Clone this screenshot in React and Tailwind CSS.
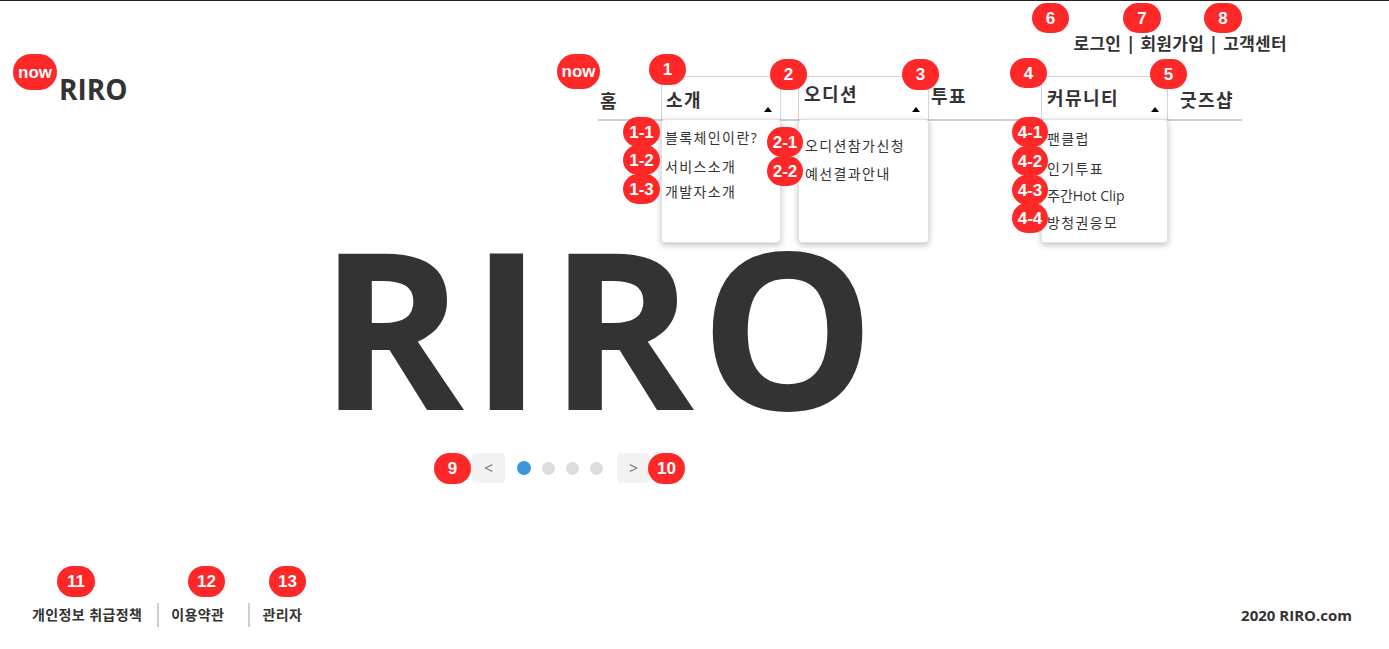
import React from 'react';

// annotation badge (red marker overlay)
const Badge = ({ className, children }) => (
  <span
    className={`absolute flex items-center justify-center rounded-full bg-[#ff2828] text-white font-bold text-[17px] leading-none tracking-normal font-['Liberation_Sans',Arial,sans-serif] ${className}`}
  >
    {children}
  </span>
);

const Caret = () => (
  <span className="absolute right-[8px] bottom-[7px] w-0 h-0 border-l-[4px] border-r-[4px] border-b-[5px] border-l-transparent border-r-transparent border-b-black" />
);

const dropdown =
  'absolute left-[-1px] top-[42px] h-[124px] bg-white border border-[#e2e2e2] rounded-[4px] shadow-[0_2px_6px_rgba(0,0,0,0.25)] text-[14px] font-normal leading-[20px] tracking-[1.4px]';

const App = () => {
  return (
    <div className="relative w-[1389px] h-[649px] overflow-hidden bg-white border-t border-[#222] text-[#333] flex flex-col font-['Open_Sans','Noto_Sans_CJK_KR',sans-serif]">
      {/* header */}
      <div className="flex items-start">
        <div className="pl-[59px] pt-[70px] text-[28px] font-bold leading-[36px]">RIRO</div>

        <div className="ml-auto mr-[102px] w-[689px] flex flex-col">
          <div className="pt-[32px] text-right text-[17px] font-bold leading-[22px] tracking-[0.3px]">
            로그인 | 회원가입 | 고객센터
          </div>

          {/* nav */}
          <div className="mt-[21px] w-[644px] h-[45px] flex border-b-2 border-[#cfcfcf] text-[18px] font-bold leading-[24px] tracking-[1.4px]">
            <div className="w-[63px] pt-[13px] pl-[2px]">홈</div>

            <div className="relative w-[120px] border border-b-0 border-[#d4d4d4] pt-[11px] pl-[4px]">
              소개
              <Caret />
              <div className={`${dropdown} w-[120px] pl-[3px] pt-[8px]`}>
                <div>블록체인이란?</div>
                <div className="mt-[9px]">서비스소개</div>
                <div className="mt-[5px]">개발자소개</div>
              </div>
            </div>

            <div className="w-[17px]" />

            <div className="relative w-[131px] border border-b-0 border-[#d4d4d4] pt-[5px] pl-[5px]">
              오디션
              <Caret />
              <div className={`${dropdown} w-[131px] pl-[6px] pt-[16px]`}>
                <div>오디션참가신청</div>
                <div className="mt-[8px]">예선결과안내</div>
              </div>
            </div>

            <div className="w-[112px] pt-[8px] pl-[2px]">투표</div>

            <div className="relative w-[127px] border border-b-0 border-[#d4d4d4] pt-[9px] pl-[5px]">
              커뮤니티
              <Caret />
              <div className={`${dropdown} w-[127px] pl-[5px] pt-[9px]`}>
                <div>팬클럽</div>
                <div className="mt-[10px]">인기투표</div>
                <div className="mt-[7px] tracking-normal">주간Hot Clip</div>
                <div className="mt-[7px]">방청권응모</div>
              </div>
            </div>

            <div className="flex-1 pt-[12px] pl-[12px]">굿즈샵</div>
          </div>
        </div>
      </div>

      {/* hero */}
      <div className="ml-[318px] mt-[94px] w-[564px] flex justify-center">
        <div className="text-[220px] font-bold leading-[220px] tracking-[6px] text-[#333]">RIRO</div>
      </div>

      {/* slider controls */}
      <div className="ml-[472px] mt-[18px] flex items-center h-[30px]">
        <button className="w-[33px] h-[30px] rounded-[4px] bg-[#f3f3f3] text-[#777] text-[16px] leading-none">&lt;</button>
        <div className="flex items-center gap-[11px] ml-[12px]">
          <span className="w-[14px] h-[14px] rounded-full bg-[#3b95dd]" />
          <span className="w-[13px] h-[13px] rounded-full bg-[#dddddd]" />
          <span className="w-[13px] h-[13px] rounded-full bg-[#dddddd]" />
          <span className="w-[13px] h-[13px] rounded-full bg-[#dddddd]" />
        </div>
        <button className="ml-[14px] w-[33px] h-[30px] rounded-[4px] bg-[#f3f3f3] text-[#777] text-[16px] leading-none">&gt;</button>
      </div>

      {/* footer */}
      <div className="mt-auto mb-[22px] flex items-center px-[32px] text-[14px] font-bold leading-[20px] tracking-[0.4px]">
        <span>개인정보 취급정책</span>
        <span className="ml-[15px] mr-[12px] w-[2px] h-[24px] bg-[#cfcfcf]" />
        <span>이용약관</span>
        <span className="ml-[24px] mr-[12px] w-[2px] h-[24px] bg-[#cfcfcf]" />
        <span>관리자</span>
        <span className="ml-auto mr-[5px] text-[15px] tracking-normal">2020 RIRO.com</span>
      </div>

      {/* annotation markers */}
      <Badge className="left-[13px] top-[53px] w-[44px] h-[36px]">now</Badge>
      <Badge className="left-[557px] top-[53px] w-[43px] h-[35px]">now</Badge>
      <Badge className="left-[649px] top-[53px] w-[37px] h-[31px]">1</Badge>
      <Badge className="left-[770px] top-[58px] w-[37px] h-[31px]">2</Badge>
      <Badge className="left-[902px] top-[58px] w-[37px] h-[31px]">3</Badge>
      <Badge className="left-[1010px] top-[57px] w-[37px] h-[30px]">4</Badge>
      <Badge className="left-[1150px] top-[58px] w-[37px] h-[30px]">5</Badge>
      <Badge className="left-[1032px] top-[2px] w-[37px] h-[30px]">6</Badge>
      <Badge className="left-[1123px] top-[2px] w-[38px] h-[30px]">7</Badge>
      <Badge className="left-[1204px] top-[2px] w-[38px] h-[30px]">8</Badge>

      <Badge className="left-[623px] top-[116px] w-[37px] h-[30px]">1-1</Badge>
      <Badge className="left-[623px] top-[144px] w-[37px] h-[30px]">1-2</Badge>
      <Badge className="left-[623px] top-[173px] w-[37px] h-[30px]">1-3</Badge>
      <Badge className="left-[767px] top-[126px] w-[36px] h-[30px]">2-1</Badge>
      <Badge className="left-[767px] top-[155px] w-[36px] h-[30px]">2-2</Badge>
      <Badge className="left-[1012px] top-[116px] w-[36px] h-[30px]">4-1</Badge>
      <Badge className="left-[1012px] top-[145px] w-[36px] h-[30px]">4-2</Badge>
      <Badge className="left-[1012px] top-[174px] w-[36px] h-[30px]">4-3</Badge>
      <Badge className="left-[1012px] top-[202px] w-[36px] h-[30px]">4-4</Badge>

      <Badge className="left-[434px] top-[452px] w-[37px] h-[31px]">9</Badge>
      <Badge className="left-[648px] top-[452px] w-[37px] h-[31px]">10</Badge>

      <Badge className="left-[57px] top-[565px] w-[38px] h-[31px]">11</Badge>
      <Badge className="left-[188px] top-[565px] w-[37px] h-[31px]">12</Badge>
      <Badge className="left-[269px] top-[565px] w-[37px] h-[31px]">13</Badge>
    </div>
  );
};

export default App;
